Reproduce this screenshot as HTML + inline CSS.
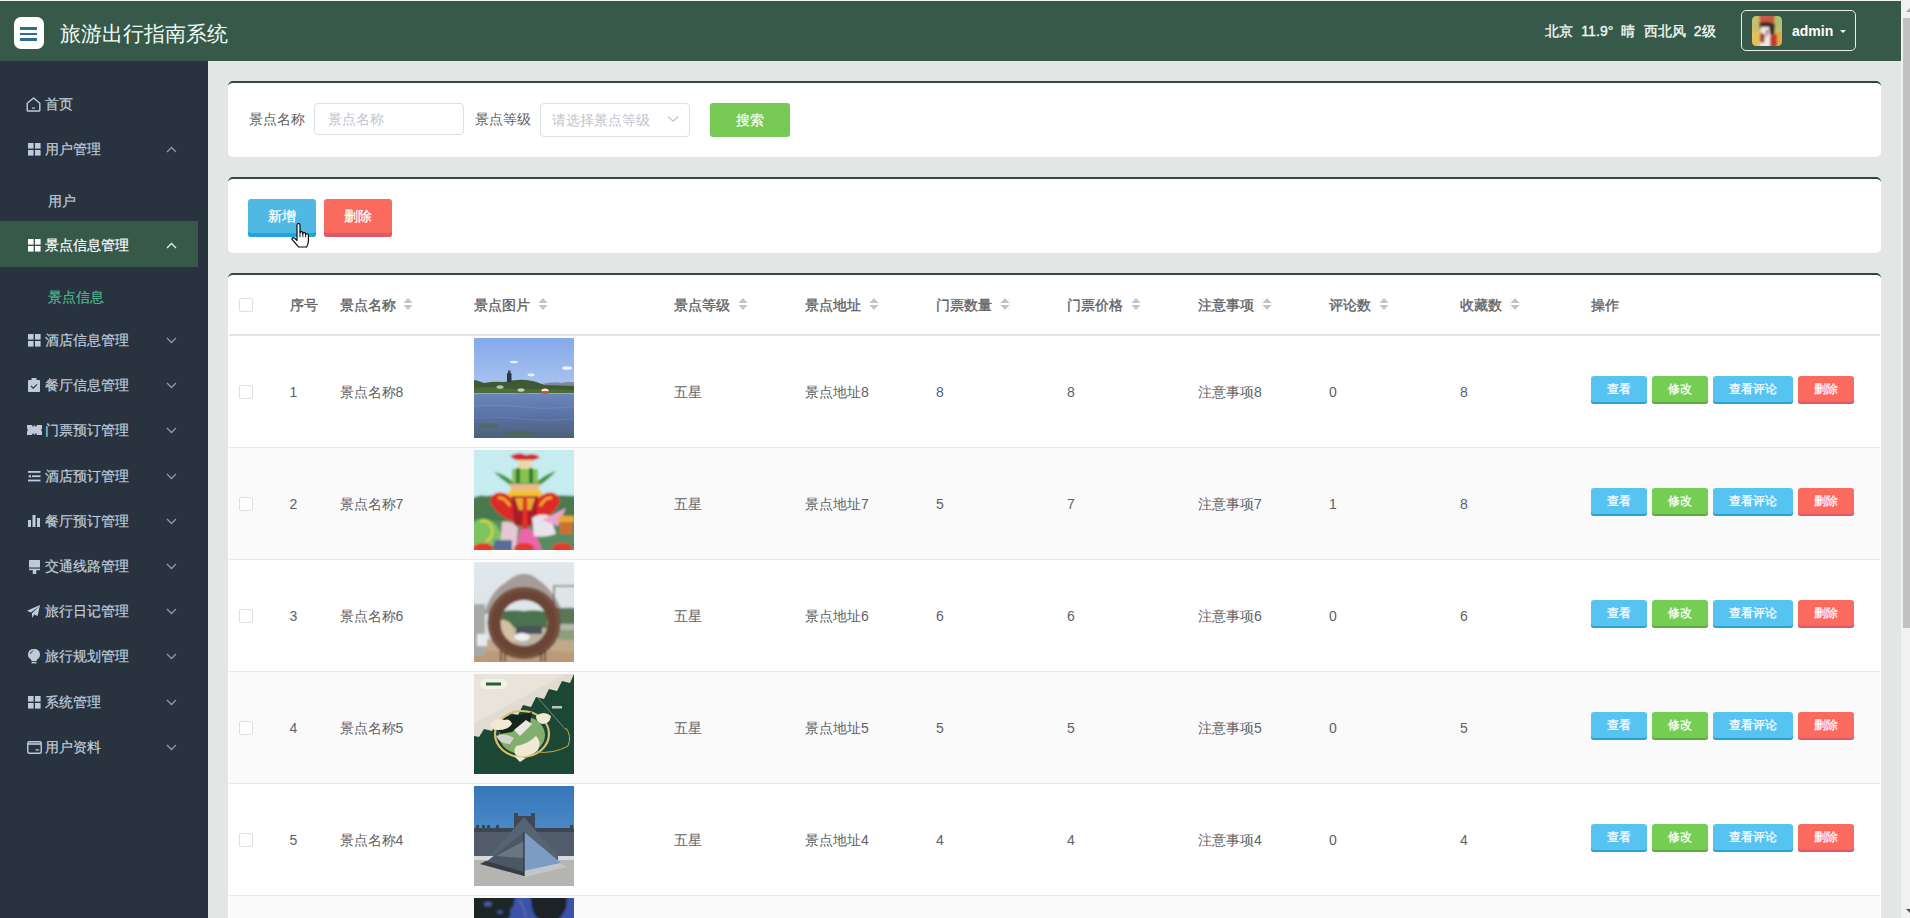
<!DOCTYPE html>
<html><head><meta charset="utf-8"><style>
*{box-sizing:border-box;margin:0;padding:0}
html,body{width:1910px;height:918px;overflow:hidden}
body{position:relative;background:#e4e6e5;font-family:"Liberation Sans",sans-serif;font-size:14px;color:#606266}
.abs{position:absolute}
.st{font-size:14px;line-height:20px;white-space:nowrap;-webkit-text-stroke:0.2px currentColor}
</style></head><body>
<div class="abs" style="left:0;top:0;width:1901px;height:1px;background:#eef5f1"></div>
<div class="abs" style="left:0;top:1px;width:1901px;height:60px;background:#36594a"></div>
<div class="abs" style="left:14px;top:17px;width:30px;height:32px;background:#fff;border-radius:7px"></div>
<div class="abs" style="left:20px;top:27px;width:17px;height:2.6px;background:#2b6f88"></div>
<div class="abs" style="left:20px;top:32.6px;width:17px;height:2.6px;background:#2b6f88"></div>
<div class="abs" style="left:20px;top:38.2px;width:17px;height:2.6px;background:#2b6f88"></div>
<div class="abs" style="left:60px;top:15.5px;font-size:20.7px;line-height:36px;color:#f4fbf6;white-space:nowrap">旅游出行指南系统</div>
<div class="abs" style="left:1545px;top:21px;font-size:14px;line-height:20px;color:#f2f8f4;white-space:pre;-webkit-text-stroke:0.35px #f2f8f4;letter-spacing:0.1px">北京  11.9°  晴  西北风  2级</div>
<div class="abs" style="left:1741px;top:10px;width:115px;height:41px;border:1px solid #e6efe9;border-radius:5px"></div>
<svg class="abs" style="left:1752px;top:16px;width:30px;height:30px;border-radius:4px" viewBox="0 0 30 30"><defs><filter id="bav" x="-10%" y="-10%" width="120%" height="120%"><feGaussianBlur stdDeviation="1.3"/></filter><clipPath id="cav"><rect width="30" height="30" rx="4"/></clipPath></defs><g clip-path="url(#cav)"><g filter="url(#bav)"><rect x="-3" y="-3" width="36" height="36" fill="#c8bf6e"/><rect x="-3" y="15" width="12" height="18" fill="#e2c05a"/><rect x="20" y="-3" width="13" height="16" fill="#b0c070"/><rect x="20" y="16" width="13" height="17" fill="#e0a848"/><path d="M7 -2 H23 L22 9 H8 Z" fill="#c85a44"/><path d="M7 7 Q15 4 23 8 L22 13 H8 Z" fill="#4a2a28"/><path d="M9 11 H21 L20 31 H8 Z" fill="#f4e4e2"/><path d="M17 11 L23 10 L22 20 L18 19 Z" fill="#3a2a2a"/><path d="M18 20 L25 18 L25 31 H18 Z" fill="#c03a2a"/><path d="M8 17 L13 18 L12 27 L8 26 Z" fill="#9a4a38"/><path d="M14 14 L16 14 L15 22 Z" fill="#4a3030"/></g></g></svg>
<div class="abs" style="left:1792px;top:21px;font-size:14px;line-height:20px;color:#fff;font-weight:bold">admin</div>
<div class="abs" style="left:1840px;top:30px;width:0;height:0;border-left:3px solid transparent;border-right:3px solid transparent;border-top:3.5px solid #fff"></div>
<div class="abs" style="left:0;top:61px;width:208px;height:857px;background:#293340"></div>
<div class="abs" style="left:0;top:221px;width:198px;height:46px;background:#36594a"></div>
<div class="abs st" style="left:45px;top:94px;color:#bfcbd9">首页</div>
<svg class="abs" style="left:26px;top:97px;width:15px;height:15px" viewBox="0 0 15 15" fill="#bfcbd9" ><path d="M7.5 1 L13.8 6.2 V13.2 Q13.8 14 13 14 H2 Q1.2 14 1.2 13.2 V6.2 Z" fill="none" stroke="#bfcbd9" stroke-width="1.4" stroke-linejoin="round"/><path d="M6 10.8 Q7.5 11.8 9 10.8" fill="none" stroke="#bfcbd9" stroke-width="1.1"/></svg>
<div class="abs st" style="left:45px;top:139px;color:#bfcbd9">用户管理</div>
<svg class="abs" style="left:28px;top:143px;width:13px;height:13px" viewBox="0 0 13 13" fill="#bfcbd9" ><rect x="0" y="0" width="5.6" height="5.6"/><rect x="7" y="0" width="5.6" height="5.6"/><rect x="0" y="7" width="5.6" height="5.6"/><rect x="7" y="7" width="5.6" height="5.6"/></svg>
<svg class="abs" style="left:165.5px;top:145.5px;width:11px;height:7px" viewBox="0 0 11 7" fill="#8f9aa6" ><path d="M1 6 L5.5 1.5 L10 6" fill="none" stroke="#8f9aa6" stroke-width="1.3"/></svg>
<div class="abs st" style="left:48px;top:191px;color:#bfcbd9">用户</div>
<div class="abs st" style="left:45px;top:235px;color:#ffffff">景点信息管理</div>
<svg class="abs" style="left:28px;top:239px;width:13px;height:13px" viewBox="0 0 13 13" fill="#ffffff" ><rect x="0" y="0" width="5.6" height="5.6"/><rect x="7" y="0" width="5.6" height="5.6"/><rect x="0" y="7" width="5.6" height="5.6"/><rect x="7" y="7" width="5.6" height="5.6"/></svg>
<svg class="abs" style="left:165.5px;top:241.5px;width:11px;height:7px" viewBox="0 0 11 7" fill="#e8eeea" ><path d="M1 6 L5.5 1.5 L10 6" fill="none" stroke="#e8eeea" stroke-width="1.3"/></svg>
<div class="abs st" style="left:48px;top:287px;color:#4db68c">景点信息</div>
<div class="abs st" style="left:45px;top:330px;color:#bfcbd9">酒店信息管理</div>
<svg class="abs" style="left:28px;top:334px;width:13px;height:13px" viewBox="0 0 13 13" fill="#bfcbd9" ><rect x="0" y="0" width="5.6" height="5.6"/><rect x="7" y="0" width="5.6" height="5.6"/><rect x="0" y="7" width="5.6" height="5.6"/><rect x="7" y="7" width="5.6" height="5.6"/></svg>
<svg class="abs" style="left:165.5px;top:336.5px;width:11px;height:7px" viewBox="0 0 11 7" fill="#8f9aa6" ><path d="M1 1 L5.5 5.5 L10 1" fill="none" stroke="#8f9aa6" stroke-width="1.3"/></svg>
<div class="abs st" style="left:45px;top:375px;color:#bfcbd9">餐厅信息管理</div>
<svg class="abs" style="left:28px;top:378px;width:12px;height:14px" viewBox="0 0 12 14" fill="#bfcbd9" ><rect x="0" y="2" width="12" height="12" rx="0.8"/><rect x="3.5" y="0" width="5" height="3" rx="0.6"/><path d="M3 8 L5.2 10.2 L9 6.3" fill="none" stroke="#293340" stroke-width="1.1"/></svg>
<svg class="abs" style="left:165.5px;top:381.5px;width:11px;height:7px" viewBox="0 0 11 7" fill="#8f9aa6" ><path d="M1 1 L5.5 5.5 L10 1" fill="none" stroke="#8f9aa6" stroke-width="1.3"/></svg>
<div class="abs st" style="left:45px;top:420px;color:#bfcbd9">门票预订管理</div>
<svg class="abs" style="left:26.6px;top:425px;width:15px;height:10px" viewBox="0 0 15 10" fill="#bfcbd9" ><path d="M0 0 H5 L6 2 L7.5 0 L9 2 L10 0 H15 V3.2 Q13.3 5 15 6.8 V10 H10 L9 8 L7.5 10 L6 8 L5 10 H0 V6.8 Q1.7 5 0 3.2 Z"/></svg>
<svg class="abs" style="left:165.5px;top:426.5px;width:11px;height:7px" viewBox="0 0 11 7" fill="#8f9aa6" ><path d="M1 1 L5.5 5.5 L10 1" fill="none" stroke="#8f9aa6" stroke-width="1.3"/></svg>
<div class="abs st" style="left:45px;top:466px;color:#bfcbd9">酒店预订管理</div>
<svg class="abs" style="left:28px;top:471px;width:13px;height:11px" viewBox="0 0 13 11" fill="#bfcbd9" ><rect x="0" y="0" width="12.5" height="1.8"/><rect x="4" y="4.3" width="8.5" height="1.8"/><path d="M0 5.2 L2.8 3.4 V7 Z"/><rect x="0" y="8.6" width="12.5" height="1.8"/></svg>
<svg class="abs" style="left:165.5px;top:472.5px;width:11px;height:7px" viewBox="0 0 11 7" fill="#8f9aa6" ><path d="M1 1 L5.5 5.5 L10 1" fill="none" stroke="#8f9aa6" stroke-width="1.3"/></svg>
<div class="abs st" style="left:45px;top:511px;color:#bfcbd9">餐厅预订管理</div>
<svg class="abs" style="left:28px;top:515px;width:12px;height:12px" viewBox="0 0 12 12" fill="#bfcbd9" ><rect x="0" y="5" width="3" height="7"/><rect x="4.5" y="0" width="3" height="12"/><rect x="9" y="3" width="3" height="9"/></svg>
<svg class="abs" style="left:165.5px;top:517.5px;width:11px;height:7px" viewBox="0 0 11 7" fill="#8f9aa6" ><path d="M1 1 L5.5 5.5 L10 1" fill="none" stroke="#8f9aa6" stroke-width="1.3"/></svg>
<div class="abs st" style="left:45px;top:556px;color:#bfcbd9">交通线路管理</div>
<svg class="abs" style="left:28.5px;top:559.5px;width:11px;height:14px" viewBox="0 0 11 14" fill="#bfcbd9" ><rect x="0" y="0" width="11" height="7.5" rx="0.5"/><rect x="0" y="8.6" width="11" height="1.6"/><rect x="3.8" y="10" width="3.4" height="4"/></svg>
<svg class="abs" style="left:165.5px;top:562.5px;width:11px;height:7px" viewBox="0 0 11 7" fill="#8f9aa6" ><path d="M1 1 L5.5 5.5 L10 1" fill="none" stroke="#8f9aa6" stroke-width="1.3"/></svg>
<div class="abs st" style="left:45px;top:601px;color:#bfcbd9">旅行日记管理</div>
<svg class="abs" style="left:27px;top:605px;width:13px;height:13px" viewBox="0 0 13 13" fill="#bfcbd9" ><path d="M13 0 L0 5.8 L3.8 7.4 L12 1.4 L5 8.3 V13 L7.2 9.4 L10.6 11 Z"/></svg>
<svg class="abs" style="left:165.5px;top:607.5px;width:11px;height:7px" viewBox="0 0 11 7" fill="#8f9aa6" ><path d="M1 1 L5.5 5.5 L10 1" fill="none" stroke="#8f9aa6" stroke-width="1.3"/></svg>
<div class="abs st" style="left:45px;top:646px;color:#bfcbd9">旅行规划管理</div>
<svg class="abs" style="left:27.5px;top:648.5px;width:12px;height:15px" viewBox="0 0 12 15" fill="#bfcbd9" ><path d="M6 0 Q12 0 12 5.8 Q12 8.8 8.6 11 V12 H3.4 V11 Q0 8.8 0 5.8 Q0 0 6 0 Z"/><rect x="3.5" y="12.8" width="5" height="1.6"/><path d="M2.5 5 Q2.8 2.2 5.4 1.8" fill="none" stroke="#293340" stroke-width="0.8"/></svg>
<svg class="abs" style="left:165.5px;top:652.5px;width:11px;height:7px" viewBox="0 0 11 7" fill="#8f9aa6" ><path d="M1 1 L5.5 5.5 L10 1" fill="none" stroke="#8f9aa6" stroke-width="1.3"/></svg>
<div class="abs st" style="left:45px;top:692px;color:#bfcbd9">系统管理</div>
<svg class="abs" style="left:28px;top:696px;width:13px;height:13px" viewBox="0 0 13 13" fill="#bfcbd9" ><rect x="0" y="0" width="5.6" height="5.6"/><rect x="7" y="0" width="5.6" height="5.6"/><rect x="0" y="7" width="5.6" height="5.6"/><rect x="7" y="7" width="5.6" height="5.6"/></svg>
<svg class="abs" style="left:165.5px;top:698.5px;width:11px;height:7px" viewBox="0 0 11 7" fill="#8f9aa6" ><path d="M1 1 L5.5 5.5 L10 1" fill="none" stroke="#8f9aa6" stroke-width="1.3"/></svg>
<div class="abs st" style="left:45px;top:737px;color:#bfcbd9">用户资料</div>
<svg class="abs" style="left:26.6px;top:741px;width:15px;height:13px" viewBox="0 0 15 13" fill="#bfcbd9" ><rect x="0.8" y="0.8" width="13.4" height="11.4" rx="1.3" fill="none" stroke="#bfcbd9" stroke-width="1.4"/><rect x="1" y="2.2" width="13" height="1.6"/><rect x="8.5" y="8.3" width="3.6" height="1.2"/></svg>
<svg class="abs" style="left:165.5px;top:743.5px;width:11px;height:7px" viewBox="0 0 11 7" fill="#8f9aa6" ><path d="M1 1 L5.5 5.5 L10 1" fill="none" stroke="#8f9aa6" stroke-width="1.3"/></svg>
<div class="abs" style="left:228px;top:81px;width:1653px;height:76px;background:#fff;border-top:2px solid #2d4a3d;border-radius:5px"></div>
<div class="abs" style="left:248.5px;top:109.0px;font-size:14px;line-height:20px;color:#606266;font-weight:normal;white-space:nowrap;">景点名称</div>
<div class="abs" style="left:314px;top:103px;width:150px;height:32px;border:1px solid #dcdfe6;border-radius:4px"></div>
<div class="abs" style="left:327.5px;top:109.0px;font-size:14px;line-height:20px;color:#c0c4cc;font-weight:normal;white-space:nowrap;">景点名称</div>
<div class="abs" style="left:474.5px;top:109.0px;font-size:14px;line-height:20px;color:#606266;font-weight:normal;white-space:nowrap;">景点等级</div>
<div class="abs" style="left:540px;top:103px;width:150px;height:34px;border:1px solid #dcdfe6;border-radius:4px"></div>
<div class="abs" style="left:551.5px;top:109.5px;font-size:14px;line-height:20px;color:#c0c4cc;font-weight:normal;white-space:nowrap;">请选择景点等级</div>
<svg class="abs" style="left:667px;top:115px;width:12px;height:8px" viewBox="0 0 12 8"><path d="M1 1.5 L6 6.2 L11 1.5" fill="none" stroke="#c0c4cc" stroke-width="1.2"/></svg>
<div class="abs" style="left:710px;top:103px;width:80px;height:34px;background:#76c955;border-radius:3px;box-shadow:inset 0 -0px 0 #76c955;color:#f4fbef;font-size:14px;line-height:34px;text-align:center;white-space:nowrap;-webkit-text-stroke:0.25px #f4fbef">搜索</div>
<div class="abs" style="left:228px;top:177px;width:1653px;height:76px;background:#fff;border-top:2px solid #2d4a3d;border-radius:5px"></div>
<div class="abs" style="left:248px;top:199px;width:68px;height:38px;background:#4fb9e4;border-radius:3px;box-shadow:inset 0 -4px 0 #22a3d9;color:#fff;font-size:14px;line-height:34px;text-align:center;white-space:nowrap;-webkit-text-stroke:0.25px #fff">新增</div>
<div class="abs" style="left:324px;top:199px;width:68px;height:38px;background:#fb6a5e;border-radius:3px;box-shadow:inset 0 -4px 0 #dd5a62;color:#fff;font-size:14px;line-height:34px;text-align:center;white-space:nowrap;-webkit-text-stroke:0.25px #fff">删除</div>
<svg class="abs" style="left:290.5px;top:222.8px;width:19px;height:25px" viewBox="0 0 19 25"><path d="M6 1.9 Q6 0.5 7.5 0.5 Q9 0.5 9 1.9 V9.9 Q9.3 8.6 10.45 8.6 Q11.8 8.6 11.8 10 V10.8 Q12.1 9.6 13.2 9.6 Q14.6 9.6 14.6 11 V11.8 Q14.9 10.7 16 10.7 Q17.4 10.7 17.4 12.1 V17.6 Q17.4 21 15.6 24 H7.6 Q5.4 21.4 1.6 17.2 Q0.4 15.9 1.4 15 Q2.4 14.2 3.6 15.2 L6 17.5 Z" fill="#fff" stroke="#000" stroke-width="1.15" stroke-linejoin="round"/><path d="M9 10 V14.2 M11.8 10.8 V14.2 M14.6 11.8 V14.2" stroke="#000" stroke-width="0.9"/></svg>
<div class="abs" style="left:228px;top:273px;width:1653px;height:700px;background:#fff;border-top:2px solid #2d4a3d;border-radius:5px"></div>
<div class="abs" style="left:239px;top:298px;width:14px;height:14px;border:1px solid #dcdfe6;border-radius:2px;background:#fff"></div>
<div class="abs" style="left:289.5px;top:294.5px;font-size:14px;line-height:20px;color:#606266;font-weight:normal;white-space:nowrap;-webkit-text-stroke:0.35px #606266">序号</div>
<div class="abs" style="left:339.5px;top:294.5px;font-size:14px;line-height:20px;color:#606266;font-weight:normal;white-space:nowrap;-webkit-text-stroke:0.35px #606266">景点名称</div>
<svg class="abs" style="left:403.0px;top:298px;width:10px;height:12px" viewBox="0 0 10 12" fill="#c0c4cc"><path d="M5 0 L9.6 5 H0.4 Z"/><path d="M0.4 7 H9.6 L5 12 Z"/></svg>
<div class="abs" style="left:474px;top:294.5px;font-size:14px;line-height:20px;color:#606266;font-weight:normal;white-space:nowrap;-webkit-text-stroke:0.35px #606266">景点图片</div>
<svg class="abs" style="left:537.5px;top:298px;width:10px;height:12px" viewBox="0 0 10 12" fill="#c0c4cc"><path d="M5 0 L9.6 5 H0.4 Z"/><path d="M0.4 7 H9.6 L5 12 Z"/></svg>
<div class="abs" style="left:674px;top:294.5px;font-size:14px;line-height:20px;color:#606266;font-weight:normal;white-space:nowrap;-webkit-text-stroke:0.35px #606266">景点等级</div>
<svg class="abs" style="left:737.5px;top:298px;width:10px;height:12px" viewBox="0 0 10 12" fill="#c0c4cc"><path d="M5 0 L9.6 5 H0.4 Z"/><path d="M0.4 7 H9.6 L5 12 Z"/></svg>
<div class="abs" style="left:805px;top:294.5px;font-size:14px;line-height:20px;color:#606266;font-weight:normal;white-space:nowrap;-webkit-text-stroke:0.35px #606266">景点地址</div>
<svg class="abs" style="left:868.5px;top:298px;width:10px;height:12px" viewBox="0 0 10 12" fill="#c0c4cc"><path d="M5 0 L9.6 5 H0.4 Z"/><path d="M0.4 7 H9.6 L5 12 Z"/></svg>
<div class="abs" style="left:936px;top:294.5px;font-size:14px;line-height:20px;color:#606266;font-weight:normal;white-space:nowrap;-webkit-text-stroke:0.35px #606266">门票数量</div>
<svg class="abs" style="left:999.5px;top:298px;width:10px;height:12px" viewBox="0 0 10 12" fill="#c0c4cc"><path d="M5 0 L9.6 5 H0.4 Z"/><path d="M0.4 7 H9.6 L5 12 Z"/></svg>
<div class="abs" style="left:1067px;top:294.5px;font-size:14px;line-height:20px;color:#606266;font-weight:normal;white-space:nowrap;-webkit-text-stroke:0.35px #606266">门票价格</div>
<svg class="abs" style="left:1130.5px;top:298px;width:10px;height:12px" viewBox="0 0 10 12" fill="#c0c4cc"><path d="M5 0 L9.6 5 H0.4 Z"/><path d="M0.4 7 H9.6 L5 12 Z"/></svg>
<div class="abs" style="left:1198px;top:294.5px;font-size:14px;line-height:20px;color:#606266;font-weight:normal;white-space:nowrap;-webkit-text-stroke:0.35px #606266">注意事项</div>
<svg class="abs" style="left:1261.5px;top:298px;width:10px;height:12px" viewBox="0 0 10 12" fill="#c0c4cc"><path d="M5 0 L9.6 5 H0.4 Z"/><path d="M0.4 7 H9.6 L5 12 Z"/></svg>
<div class="abs" style="left:1329px;top:294.5px;font-size:14px;line-height:20px;color:#606266;font-weight:normal;white-space:nowrap;-webkit-text-stroke:0.35px #606266">评论数</div>
<svg class="abs" style="left:1378.7px;top:298px;width:10px;height:12px" viewBox="0 0 10 12" fill="#c0c4cc"><path d="M5 0 L9.6 5 H0.4 Z"/><path d="M0.4 7 H9.6 L5 12 Z"/></svg>
<div class="abs" style="left:1460px;top:294.5px;font-size:14px;line-height:20px;color:#606266;font-weight:normal;white-space:nowrap;-webkit-text-stroke:0.35px #606266">收藏数</div>
<svg class="abs" style="left:1509.7px;top:298px;width:10px;height:12px" viewBox="0 0 10 12" fill="#c0c4cc"><path d="M5 0 L9.6 5 H0.4 Z"/><path d="M0.4 7 H9.6 L5 12 Z"/></svg>
<div class="abs" style="left:1591px;top:294.5px;font-size:14px;line-height:20px;color:#606266;font-weight:normal;white-space:nowrap;-webkit-text-stroke:0.35px #606266">操作</div>
<div class="abs" style="left:229px;top:334px;width:1651px;height:2px;background:#e3e3e3"></div>
<div class="abs" style="left:229px;top:336px;width:1651px;height:111px;background:#fff"></div>
<div class="abs" style="left:229px;top:447px;width:1651px;height:1px;background:#e8e8e8"></div>
<svg class="abs" style="left:474px;top:338px;width:100px;height:100px" viewBox="0 0 100 100"><defs><linearGradient id="sky1" x1="0" y1="0" x2="0" y2="1"><stop offset="0" stop-color="#82a6ea"/><stop offset="0.6" stop-color="#b0caf0"/><stop offset="1" stop-color="#d2e0f2"/></linearGradient><linearGradient id="wat1" x1="0" y1="0" x2="0" y2="1"><stop offset="0" stop-color="#6a86ba"/><stop offset="0.45" stop-color="#5a72a4"/><stop offset="1" stop-color="#4a5c6c"/></linearGradient><filter id="bll1" x="-5%" y="-5%" width="110%" height="110%"><feGaussianBlur stdDeviation="0.6"/></filter><clipPath id="cpl1"><rect width="100" height="100"/></clipPath></defs><g clip-path="url(#cpl1)"><g filter="url(#bll1)"><rect x="-5" y="-5" width="110" height="110" fill="url(#sky1)"/><ellipse cx="40" cy="24" rx="4" ry="1.3" fill="#e8f0fa"/><ellipse cx="93" cy="30" rx="5" ry="1.8" fill="#eef4fb"/><ellipse cx="57" cy="37" rx="3.5" ry="1.4" fill="#e8f0fa"/><path d="M68 46 Q80 43 88 45 Q95 43 105 45 V55 H68 Z" fill="#7e8c9a"/><path d="M-5 41 Q4 42 10 45 Q20 43 30 44 Q42 41 52 42 Q62 43 70 47 L105 48 V55 H-5 Z" fill="#3c5a30"/><path d="M-5 50 Q20 48 40 51 Q70 51 105 52 V55 H-5 Z" fill="#4e6c3a"/><ellipse cx="26" cy="49" rx="3.5" ry="1.8" fill="#b8c0b8"/><ellipse cx="47" cy="52" rx="3.5" ry="1.8" fill="#c8c8c0"/><rect x="33" y="35" width="4.5" height="9" rx="1" fill="#283848"/><rect x="34" y="32.5" width="2.5" height="3" fill="#34485a"/><rect x="43" y="55" width="10" height="3" fill="#d09040"/><ellipse cx="71" cy="52.5" rx="3.5" ry="2" fill="#f0e8e0"/><rect x="67.5" y="53" width="7" height="5.5" rx="1.5" fill="#e05028"/><rect x="-5" y="55.5" width="110" height="50" fill="url(#wat1)"/><path d="M-5 68 Q25 66 50 69 Q75 72 105 68" fill="none" stroke="#8098c0" stroke-width="0.8" opacity="0.6"/><path d="M-5 80 Q25 78 50 81 Q75 84 105 80" fill="none" stroke="#7a90b0" stroke-width="0.8" opacity="0.5"/><ellipse cx="15" cy="88" rx="10" ry="2.5" fill="#4e6a50" opacity="0.7"/><ellipse cx="45" cy="96" rx="14" ry="3" fill="#4e6a50" opacity="0.7"/></g></g></svg>
<div class="abs" style="left:239px;top:384.5px;width:14px;height:14px;border:1px solid #dcdfe6;border-radius:2px;background:#fff"></div>
<div class="abs" style="left:289.5px;top:381.5px;font-size:14px;line-height:20px;color:#606266;font-weight:normal;white-space:nowrap;">1</div>
<div class="abs" style="left:339.5px;top:381.5px;font-size:14px;line-height:20px;color:#606266;font-weight:normal;white-space:nowrap;">景点名称8</div>
<div class="abs" style="left:674px;top:381.5px;font-size:14px;line-height:20px;color:#606266;font-weight:normal;white-space:nowrap;">五星</div>
<div class="abs" style="left:805px;top:381.5px;font-size:14px;line-height:20px;color:#606266;font-weight:normal;white-space:nowrap;">景点地址8</div>
<div class="abs" style="left:936px;top:381.5px;font-size:14px;line-height:20px;color:#606266;font-weight:normal;white-space:nowrap;">8</div>
<div class="abs" style="left:1067px;top:381.5px;font-size:14px;line-height:20px;color:#606266;font-weight:normal;white-space:nowrap;">8</div>
<div class="abs" style="left:1198px;top:381.5px;font-size:14px;line-height:20px;color:#606266;font-weight:normal;white-space:nowrap;">注意事项8</div>
<div class="abs" style="left:1329px;top:381.5px;font-size:14px;line-height:20px;color:#606266;font-weight:normal;white-space:nowrap;">0</div>
<div class="abs" style="left:1460px;top:381.5px;font-size:14px;line-height:20px;color:#606266;font-weight:normal;white-space:nowrap;">8</div>
<div class="abs" style="left:1591px;top:376px;width:56px;height:28px;background:#56c3f0;border-radius:3px;box-shadow:inset 0 -2px 0 #2ba2d3;color:#fff;font-size:12px;line-height:26px;text-align:center;white-space:nowrap;-webkit-text-stroke:0.25px #fff">查看</div>
<div class="abs" style="left:1652px;top:376px;width:56px;height:28px;background:#76cd53;border-radius:3px;box-shadow:inset 0 -2px 0 #5fa944;color:#fff;font-size:12px;line-height:26px;text-align:center;white-space:nowrap;-webkit-text-stroke:0.25px #fff">修改</div>
<div class="abs" style="left:1713px;top:376px;width:80px;height:28px;background:#56c3f0;border-radius:3px;box-shadow:inset 0 -2px 0 #2ba2d3;color:#fff;font-size:12px;line-height:26px;text-align:center;white-space:nowrap;-webkit-text-stroke:0.25px #fff">查看评论</div>
<div class="abs" style="left:1798px;top:376px;width:56px;height:28px;background:#fb6a5e;border-radius:3px;box-shadow:inset 0 -2px 0 #dd5a62;color:#fff;font-size:12px;line-height:26px;text-align:center;white-space:nowrap;-webkit-text-stroke:0.25px #fff">删除</div>
<div class="abs" style="left:229px;top:448px;width:1651px;height:111px;background:#fafafa"></div>
<div class="abs" style="left:229px;top:559px;width:1651px;height:1px;background:#e8e8e8"></div>
<svg class="abs" style="left:474px;top:450px;width:100px;height:100px" viewBox="0 0 100 100"><defs><filter id="bll2" x="-5%" y="-5%" width="110%" height="110%"><feGaussianBlur stdDeviation="0.8"/></filter><clipPath id="cpl2"><rect width="100" height="100"/></clipPath></defs><g clip-path="url(#cpl2)"><g filter="url(#bll2)"><rect x="-5" y="-5" width="110" height="110" fill="#c6ecf0"/><path d="M-5 50 Q5 44 12 46 Q25 44 40 47 Q70 44 105 46 V105 H-5 Z" fill="#4a7a50"/><path d="M-5 70 Q30 72 60 70 L105 68 V105 H-5 Z" fill="#5a8a5e"/><path d="M36 6 Q45 1 52 5 Q60 2 66 7 Q62 11 50 11 Q40 11 36 6 Z" fill="#d22a3a"/><rect x="44" y="10" width="14" height="12" fill="#e8d8a8"/><path d="M20 22 Q30 24 38 31 H64 Q72 24 82 21 Q74 30 66 35 H36 Q28 30 20 22 Z" fill="#3a963a"/><rect x="38" y="19" width="26" height="14" fill="#86c24e"/><rect x="42" y="18" width="4" height="15" fill="#2a7a30"/><rect x="55" y="18" width="4" height="15" fill="#2a7a30"/><path d="M34 34 H67 L64 40 H38 Z" fill="#eab890"/><path d="M36 40 H66 L70 47 H32 Z" fill="#f2c232"/><path d="M16 52 Q18 40 30 43 Q40 47 44 62 L42 72 Q24 68 16 52 Z" fill="#de2a26"/><path d="M86 52 Q84 40 72 43 Q62 47 58 62 L60 72 Q78 68 86 52 Z" fill="#de2a26"/><path d="M24 48 Q30 46 36 56" fill="none" stroke="#f0b030" stroke-width="2.5"/><path d="M78 48 Q72 46 66 56" fill="none" stroke="#f0b030" stroke-width="2.5"/><path d="M38 46 H64 L62 76 H40 Z" fill="#a81a2a"/><path d="M41 48 H61 L57 60 H45 Z" fill="#e8a830"/><path d="M49 46 L53 46 L54 82 L48 82 Z" fill="#e03028"/><path d="M-5 76 Q5 66 15 70 Q26 74 30 94 L-5 98 Z" fill="#7cc462"/><path d="M6 72 Q14 68 18 78 Q20 86 12 92" fill="none" stroke="#d8d040" stroke-width="2.5"/><path d="M28 72 Q38 70 44 78 L42 100 H26 Z" fill="#e6c8d2"/><path d="M46 80 Q56 76 62 84 L68 100 H42 Z" fill="#ea66aa"/><path d="M58 68 Q66 62 76 66 L82 84 Q70 88 60 86 Z" fill="#e8e4ec"/><path d="M68 70 L92 58 L84 76 Z" fill="#f2a2ca"/><rect x="84" y="66" width="16" height="6" fill="#eaa830"/><rect x="86" y="72" width="12" height="12" fill="#cc7030"/><ellipse cx="9" cy="98" rx="10" ry="5" fill="#e23a2a"/><ellipse cx="50" cy="98" rx="10" ry="5" fill="#e23a2a"/><ellipse cx="88" cy="98" rx="10" ry="5" fill="#e23a2a"/><rect x="20" y="90" width="18" height="10" fill="#5a6a9a"/></g></g></svg>
<div class="abs" style="left:239px;top:496.5px;width:14px;height:14px;border:1px solid #dcdfe6;border-radius:2px;background:#fff"></div>
<div class="abs" style="left:289.5px;top:493.5px;font-size:14px;line-height:20px;color:#606266;font-weight:normal;white-space:nowrap;">2</div>
<div class="abs" style="left:339.5px;top:493.5px;font-size:14px;line-height:20px;color:#606266;font-weight:normal;white-space:nowrap;">景点名称7</div>
<div class="abs" style="left:674px;top:493.5px;font-size:14px;line-height:20px;color:#606266;font-weight:normal;white-space:nowrap;">五星</div>
<div class="abs" style="left:805px;top:493.5px;font-size:14px;line-height:20px;color:#606266;font-weight:normal;white-space:nowrap;">景点地址7</div>
<div class="abs" style="left:936px;top:493.5px;font-size:14px;line-height:20px;color:#606266;font-weight:normal;white-space:nowrap;">5</div>
<div class="abs" style="left:1067px;top:493.5px;font-size:14px;line-height:20px;color:#606266;font-weight:normal;white-space:nowrap;">7</div>
<div class="abs" style="left:1198px;top:493.5px;font-size:14px;line-height:20px;color:#606266;font-weight:normal;white-space:nowrap;">注意事项7</div>
<div class="abs" style="left:1329px;top:493.5px;font-size:14px;line-height:20px;color:#606266;font-weight:normal;white-space:nowrap;">1</div>
<div class="abs" style="left:1460px;top:493.5px;font-size:14px;line-height:20px;color:#606266;font-weight:normal;white-space:nowrap;">8</div>
<div class="abs" style="left:1591px;top:488px;width:56px;height:28px;background:#56c3f0;border-radius:3px;box-shadow:inset 0 -2px 0 #2ba2d3;color:#fff;font-size:12px;line-height:26px;text-align:center;white-space:nowrap;-webkit-text-stroke:0.25px #fff">查看</div>
<div class="abs" style="left:1652px;top:488px;width:56px;height:28px;background:#76cd53;border-radius:3px;box-shadow:inset 0 -2px 0 #5fa944;color:#fff;font-size:12px;line-height:26px;text-align:center;white-space:nowrap;-webkit-text-stroke:0.25px #fff">修改</div>
<div class="abs" style="left:1713px;top:488px;width:80px;height:28px;background:#56c3f0;border-radius:3px;box-shadow:inset 0 -2px 0 #2ba2d3;color:#fff;font-size:12px;line-height:26px;text-align:center;white-space:nowrap;-webkit-text-stroke:0.25px #fff">查看评论</div>
<div class="abs" style="left:1798px;top:488px;width:56px;height:28px;background:#fb6a5e;border-radius:3px;box-shadow:inset 0 -2px 0 #dd5a62;color:#fff;font-size:12px;line-height:26px;text-align:center;white-space:nowrap;-webkit-text-stroke:0.25px #fff">删除</div>
<div class="abs" style="left:229px;top:560px;width:1651px;height:111px;background:#fff"></div>
<div class="abs" style="left:229px;top:671px;width:1651px;height:1px;background:#e8e8e8"></div>
<svg class="abs" style="left:474px;top:562px;width:100px;height:100px" viewBox="0 0 100 100"><defs><linearGradient id="sky3" x1="0" y1="0" x2="0" y2="1"><stop offset="0" stop-color="#e2e8ec"/><stop offset="1" stop-color="#d8dee2"/></linearGradient><filter id="bll3" x="-5%" y="-5%" width="110%" height="110%"><feGaussianBlur stdDeviation="0.9"/></filter><clipPath id="cpl3"><rect width="100" height="100"/></clipPath></defs><g clip-path="url(#cpl3)"><g filter="url(#bll3)"><rect x="-5" y="-5" width="110" height="110" fill="url(#sky3)"/><path d="M76 47 Q90 45 105 46 V64 H76 Z" fill="#5a7856"/><path d="M76 62 H105 V84 H76 Z" fill="#b4b6aa"/><rect x="84" y="68" width="18" height="12" fill="#8aa078"/><path d="M-5 78 Q50 76 105 78 V105 H-5 Z" fill="#c0a88c"/><path d="M-5 90 Q50 88 105 90 V105 H-5 Z" fill="#bc9a78"/><rect x="-5" y="42" width="16" height="52" fill="#a8aaa8"/><rect x="3" y="72" width="10" height="12" fill="#e8eaea"/><ellipse cx="49" cy="61" rx="24" ry="25" fill="#dfe5ea"/><path d="M25 50 Q40 47 50 49 Q62 47 73 50 V67 H25 Z" fill="#4c7250"/><path d="M25 66 H73 V86 H25 Z" fill="#bcb2a6"/><rect x="42" y="64" width="26" height="8" fill="#4a5258"/><ellipse cx="48" cy="75" rx="8" ry="4" fill="#eef0f2"/><path d="M26 58 Q34 56 40 66 L40 82 Q28 80 26 58 Z" fill="#d6c0a2"/><path d="M79 24 H105 M80 24 V82" stroke="#505050" stroke-width="1.2" fill="none"/><path d="M10 52 Q16 30 32 20 Q48 6 62 16 Q78 26 88 48 L80 52 Q70 30 50 26 Q28 28 20 52 Z" fill="#6e5446" opacity="0.5"/><ellipse cx="50" cy="61" rx="30" ry="29.5" fill="none" stroke="#6a4436" stroke-width="13"/><ellipse cx="50" cy="61" rx="34" ry="33.5" fill="none" stroke="#7e5a4a" stroke-width="3" opacity="0.6"/><path d="M27 100 V88 M31 100 V90 M67 100 V90 M71 100 V88" stroke="#2a2a2a" stroke-width="1.2"/></g></g></svg>
<div class="abs" style="left:239px;top:608.5px;width:14px;height:14px;border:1px solid #dcdfe6;border-radius:2px;background:#fff"></div>
<div class="abs" style="left:289.5px;top:605.5px;font-size:14px;line-height:20px;color:#606266;font-weight:normal;white-space:nowrap;">3</div>
<div class="abs" style="left:339.5px;top:605.5px;font-size:14px;line-height:20px;color:#606266;font-weight:normal;white-space:nowrap;">景点名称6</div>
<div class="abs" style="left:674px;top:605.5px;font-size:14px;line-height:20px;color:#606266;font-weight:normal;white-space:nowrap;">五星</div>
<div class="abs" style="left:805px;top:605.5px;font-size:14px;line-height:20px;color:#606266;font-weight:normal;white-space:nowrap;">景点地址6</div>
<div class="abs" style="left:936px;top:605.5px;font-size:14px;line-height:20px;color:#606266;font-weight:normal;white-space:nowrap;">6</div>
<div class="abs" style="left:1067px;top:605.5px;font-size:14px;line-height:20px;color:#606266;font-weight:normal;white-space:nowrap;">6</div>
<div class="abs" style="left:1198px;top:605.5px;font-size:14px;line-height:20px;color:#606266;font-weight:normal;white-space:nowrap;">注意事项6</div>
<div class="abs" style="left:1329px;top:605.5px;font-size:14px;line-height:20px;color:#606266;font-weight:normal;white-space:nowrap;">0</div>
<div class="abs" style="left:1460px;top:605.5px;font-size:14px;line-height:20px;color:#606266;font-weight:normal;white-space:nowrap;">6</div>
<div class="abs" style="left:1591px;top:600px;width:56px;height:28px;background:#56c3f0;border-radius:3px;box-shadow:inset 0 -2px 0 #2ba2d3;color:#fff;font-size:12px;line-height:26px;text-align:center;white-space:nowrap;-webkit-text-stroke:0.25px #fff">查看</div>
<div class="abs" style="left:1652px;top:600px;width:56px;height:28px;background:#76cd53;border-radius:3px;box-shadow:inset 0 -2px 0 #5fa944;color:#fff;font-size:12px;line-height:26px;text-align:center;white-space:nowrap;-webkit-text-stroke:0.25px #fff">修改</div>
<div class="abs" style="left:1713px;top:600px;width:80px;height:28px;background:#56c3f0;border-radius:3px;box-shadow:inset 0 -2px 0 #2ba2d3;color:#fff;font-size:12px;line-height:26px;text-align:center;white-space:nowrap;-webkit-text-stroke:0.25px #fff">查看评论</div>
<div class="abs" style="left:1798px;top:600px;width:56px;height:28px;background:#fb6a5e;border-radius:3px;box-shadow:inset 0 -2px 0 #dd5a62;color:#fff;font-size:12px;line-height:26px;text-align:center;white-space:nowrap;-webkit-text-stroke:0.25px #fff">删除</div>
<div class="abs" style="left:229px;top:672px;width:1651px;height:111px;background:#fafafa"></div>
<div class="abs" style="left:229px;top:783px;width:1651px;height:1px;background:#e8e8e8"></div>
<svg class="abs" style="left:474px;top:674px;width:100px;height:100px" viewBox="0 0 100 100"><defs><filter id="bll4" x="-5%" y="-5%" width="110%" height="110%"><feGaussianBlur stdDeviation="0.6"/></filter><clipPath id="cpl4"><rect width="100" height="100"/></clipPath></defs><g clip-path="url(#cpl4)"><g filter="url(#bll4)"><rect x="-5" y="-5" width="110" height="110" fill="#1d4634"/><path d="M105 -5 V1 L100 0 L96 9 L88 7 L83 17 L75 15 L70 25 L62 23 L57 33 L49 31 L44 41 L36 39 L31 49 L23 47 L18 57 L10 55 L5 63 L-5 61 V-5 Z" fill="#e0dcd2"/><path d="M-5 -5 H100 L40 28 L-5 52 Z" fill="#e8e4dc"/><rect x="6" y="5" width="27" height="10" rx="5" fill="#f2f2e6"/><rect x="12" y="8.5" width="15" height="3" fill="#2a5a40"/><path d="M64 24 L92 56" stroke="#a8b8b0" stroke-width="0.6"/><rect x="78" y="32" width="10" height="2.5" fill="#b8c4bc"/><ellipse cx="48" cy="60" rx="27" ry="23" fill="none" stroke="#d8c070" stroke-width="2.2"/><ellipse cx="48" cy="61" rx="23" ry="19" fill="#84ae6e"/><path d="M24 52 Q30 40 42 41 Q52 40 58 38 L56 50 Q44 52 38 58 L26 60 Z" fill="#14281a"/><path d="M40 56 L52 46 L58 50 L46 62 Z" fill="#e8e8e0"/><path d="M16 50 Q22 43 30 46 Q36 44 38 50 Q34 56 24 56 Q16 56 16 50 Z" fill="#f0ead4"/><path d="M62 42 Q70 36 77 42 Q76 50 68 50 Q62 48 62 42 Z" fill="#f0ead4"/><path d="M22 62 Q30 58 40 64 L36 70 Q26 70 22 62 Z" fill="#d0d4cc"/><path d="M42 72 Q54 70 62 62 Q68 68 64 76 Q56 84 44 82 Q38 80 42 72 Z" fill="#f0ead4"/><path d="M40 82 L46 88 L52 84 Z" fill="#f0ead4"/><path d="M62 78 Q80 80 94 72 Q98 62 92 54" fill="none" stroke="#c8a850" stroke-width="1"/></g></g></svg>
<div class="abs" style="left:239px;top:720.5px;width:14px;height:14px;border:1px solid #dcdfe6;border-radius:2px;background:#fff"></div>
<div class="abs" style="left:289.5px;top:717.5px;font-size:14px;line-height:20px;color:#606266;font-weight:normal;white-space:nowrap;">4</div>
<div class="abs" style="left:339.5px;top:717.5px;font-size:14px;line-height:20px;color:#606266;font-weight:normal;white-space:nowrap;">景点名称5</div>
<div class="abs" style="left:674px;top:717.5px;font-size:14px;line-height:20px;color:#606266;font-weight:normal;white-space:nowrap;">五星</div>
<div class="abs" style="left:805px;top:717.5px;font-size:14px;line-height:20px;color:#606266;font-weight:normal;white-space:nowrap;">景点地址5</div>
<div class="abs" style="left:936px;top:717.5px;font-size:14px;line-height:20px;color:#606266;font-weight:normal;white-space:nowrap;">5</div>
<div class="abs" style="left:1067px;top:717.5px;font-size:14px;line-height:20px;color:#606266;font-weight:normal;white-space:nowrap;">5</div>
<div class="abs" style="left:1198px;top:717.5px;font-size:14px;line-height:20px;color:#606266;font-weight:normal;white-space:nowrap;">注意事项5</div>
<div class="abs" style="left:1329px;top:717.5px;font-size:14px;line-height:20px;color:#606266;font-weight:normal;white-space:nowrap;">0</div>
<div class="abs" style="left:1460px;top:717.5px;font-size:14px;line-height:20px;color:#606266;font-weight:normal;white-space:nowrap;">5</div>
<div class="abs" style="left:1591px;top:712px;width:56px;height:28px;background:#56c3f0;border-radius:3px;box-shadow:inset 0 -2px 0 #2ba2d3;color:#fff;font-size:12px;line-height:26px;text-align:center;white-space:nowrap;-webkit-text-stroke:0.25px #fff">查看</div>
<div class="abs" style="left:1652px;top:712px;width:56px;height:28px;background:#76cd53;border-radius:3px;box-shadow:inset 0 -2px 0 #5fa944;color:#fff;font-size:12px;line-height:26px;text-align:center;white-space:nowrap;-webkit-text-stroke:0.25px #fff">修改</div>
<div class="abs" style="left:1713px;top:712px;width:80px;height:28px;background:#56c3f0;border-radius:3px;box-shadow:inset 0 -2px 0 #2ba2d3;color:#fff;font-size:12px;line-height:26px;text-align:center;white-space:nowrap;-webkit-text-stroke:0.25px #fff">查看评论</div>
<div class="abs" style="left:1798px;top:712px;width:56px;height:28px;background:#fb6a5e;border-radius:3px;box-shadow:inset 0 -2px 0 #dd5a62;color:#fff;font-size:12px;line-height:26px;text-align:center;white-space:nowrap;-webkit-text-stroke:0.25px #fff">删除</div>
<div class="abs" style="left:229px;top:784px;width:1651px;height:111px;background:#fff"></div>
<div class="abs" style="left:229px;top:895px;width:1651px;height:1px;background:#e8e8e8"></div>
<svg class="abs" style="left:474px;top:786px;width:100px;height:100px" viewBox="0 0 100 100"><defs><linearGradient id="sky5" x1="0" y1="0" x2="0" y2="1"><stop offset="0" stop-color="#3474b8"/><stop offset="0.6" stop-color="#5290cc"/><stop offset="1" stop-color="#7eacd6"/></linearGradient><filter id="bll5" x="-5%" y="-5%" width="110%" height="110%"><feGaussianBlur stdDeviation="0.6"/></filter><clipPath id="cpl5"><rect width="100" height="100"/></clipPath></defs><g clip-path="url(#cpl5)"><g filter="url(#bll5)"><rect x="-5" y="-5" width="110" height="110" fill="url(#sky5)"/><rect x="-5" y="42" width="110" height="32" fill="#525c6a"/><rect x="-5" y="42" width="110" height="4" fill="#3a4452"/><path d="M2 42 V39 H5 V42 M8 42 V39 H11 V42 M13 42 V39 H16 V42 M22 42 V39 H25 V42 M96 42 V39 H99 V42" fill="#3a4452"/><path d="M40 44 V27 H44 V30 H57 V27 H61 V44 Z" fill="#3c4654"/><path d="M50 31 L86 72 H14 Z" fill="#566474"/><rect x="-5" y="70" width="26" height="4" fill="#d4dae0"/><rect x="84" y="70" width="21" height="4" fill="#d4dae0"/><rect x="-5" y="74" width="110" height="31" fill="#b4b4b0"/><path d="M50 46 L50 88 L12 76 Z" fill="#4c5864"/><path d="M22 70 L50 55 L50 72 Z" fill="#7a8896" opacity="0.6"/><path d="M50 46 L87 77 L50 85 Z" fill="#7c9cc4"/><path d="M6 78 L50 90 V86 L12 75 Z" fill="#363c44"/><path d="M50 85 L87 77 L93 81 L51 91 Z" fill="#c2c6ca"/><path d="M50 46 V90" stroke="#2a3038" stroke-width="1.2"/></g></g></svg>
<div class="abs" style="left:239px;top:832.5px;width:14px;height:14px;border:1px solid #dcdfe6;border-radius:2px;background:#fff"></div>
<div class="abs" style="left:289.5px;top:829.5px;font-size:14px;line-height:20px;color:#606266;font-weight:normal;white-space:nowrap;">5</div>
<div class="abs" style="left:339.5px;top:829.5px;font-size:14px;line-height:20px;color:#606266;font-weight:normal;white-space:nowrap;">景点名称4</div>
<div class="abs" style="left:674px;top:829.5px;font-size:14px;line-height:20px;color:#606266;font-weight:normal;white-space:nowrap;">五星</div>
<div class="abs" style="left:805px;top:829.5px;font-size:14px;line-height:20px;color:#606266;font-weight:normal;white-space:nowrap;">景点地址4</div>
<div class="abs" style="left:936px;top:829.5px;font-size:14px;line-height:20px;color:#606266;font-weight:normal;white-space:nowrap;">4</div>
<div class="abs" style="left:1067px;top:829.5px;font-size:14px;line-height:20px;color:#606266;font-weight:normal;white-space:nowrap;">4</div>
<div class="abs" style="left:1198px;top:829.5px;font-size:14px;line-height:20px;color:#606266;font-weight:normal;white-space:nowrap;">注意事项4</div>
<div class="abs" style="left:1329px;top:829.5px;font-size:14px;line-height:20px;color:#606266;font-weight:normal;white-space:nowrap;">0</div>
<div class="abs" style="left:1460px;top:829.5px;font-size:14px;line-height:20px;color:#606266;font-weight:normal;white-space:nowrap;">4</div>
<div class="abs" style="left:1591px;top:824px;width:56px;height:28px;background:#56c3f0;border-radius:3px;box-shadow:inset 0 -2px 0 #2ba2d3;color:#fff;font-size:12px;line-height:26px;text-align:center;white-space:nowrap;-webkit-text-stroke:0.25px #fff">查看</div>
<div class="abs" style="left:1652px;top:824px;width:56px;height:28px;background:#76cd53;border-radius:3px;box-shadow:inset 0 -2px 0 #5fa944;color:#fff;font-size:12px;line-height:26px;text-align:center;white-space:nowrap;-webkit-text-stroke:0.25px #fff">修改</div>
<div class="abs" style="left:1713px;top:824px;width:80px;height:28px;background:#56c3f0;border-radius:3px;box-shadow:inset 0 -2px 0 #2ba2d3;color:#fff;font-size:12px;line-height:26px;text-align:center;white-space:nowrap;-webkit-text-stroke:0.25px #fff">查看评论</div>
<div class="abs" style="left:1798px;top:824px;width:56px;height:28px;background:#fb6a5e;border-radius:3px;box-shadow:inset 0 -2px 0 #dd5a62;color:#fff;font-size:12px;line-height:26px;text-align:center;white-space:nowrap;-webkit-text-stroke:0.25px #fff">删除</div>
<div class="abs" style="left:229px;top:896px;width:1651px;height:111px;background:#fafafa"></div>
<div class="abs" style="left:229px;top:1007px;width:1651px;height:1px;background:#e8e8e8"></div>
<svg class="abs" style="left:474px;top:898px;width:100px;height:100px" viewBox="0 0 100 100"><defs><filter id="bll6" x="-5%" y="-5%" width="110%" height="110%"><feGaussianBlur stdDeviation="0.8"/></filter><clipPath id="cpl6"><rect width="100" height="100"/></clipPath></defs><g clip-path="url(#cpl6)"><g filter="url(#bll6)"><rect x="-5" y="-5" width="110" height="110" fill="#3a52a8"/><path d="M-5 -5 H40 Q42 6 36 12 Q38 20 30 24 Q14 26 -5 24 Z" fill="#1e2628"/><ellipse cx="14" cy="6" rx="4" ry="2.5" fill="#4a5aa0"/><ellipse cx="26" cy="14" rx="3" ry="2" fill="#404e90"/><path d="M56 -5 H92 Q94 8 90 14 Q86 24 70 24 Q60 20 58 10 Z" fill="#1c2428"/><path d="M45 2 Q50 8 52 20" fill="none" stroke="#6a74a8" stroke-width="1.2"/></g></g></svg>
<div class="abs" style="left:1901px;top:0;width:9px;height:918px;background:#f1f1f1"></div>
<div class="abs" style="left:1903px;top:18px;width:7px;height:610px;background:#c1c1c1"></div>
<div class="abs" style="left:1905.5px;top:8px;width:0;height:0;border-left:4px solid transparent;border-right:4px solid transparent;border-bottom:4px solid #a3a3a3"></div>
<div class="abs" style="left:1905.5px;top:909px;width:0;height:0;border-left:4px solid transparent;border-right:4px solid transparent;border-top:4px solid #505050"></div>
</body></html>
